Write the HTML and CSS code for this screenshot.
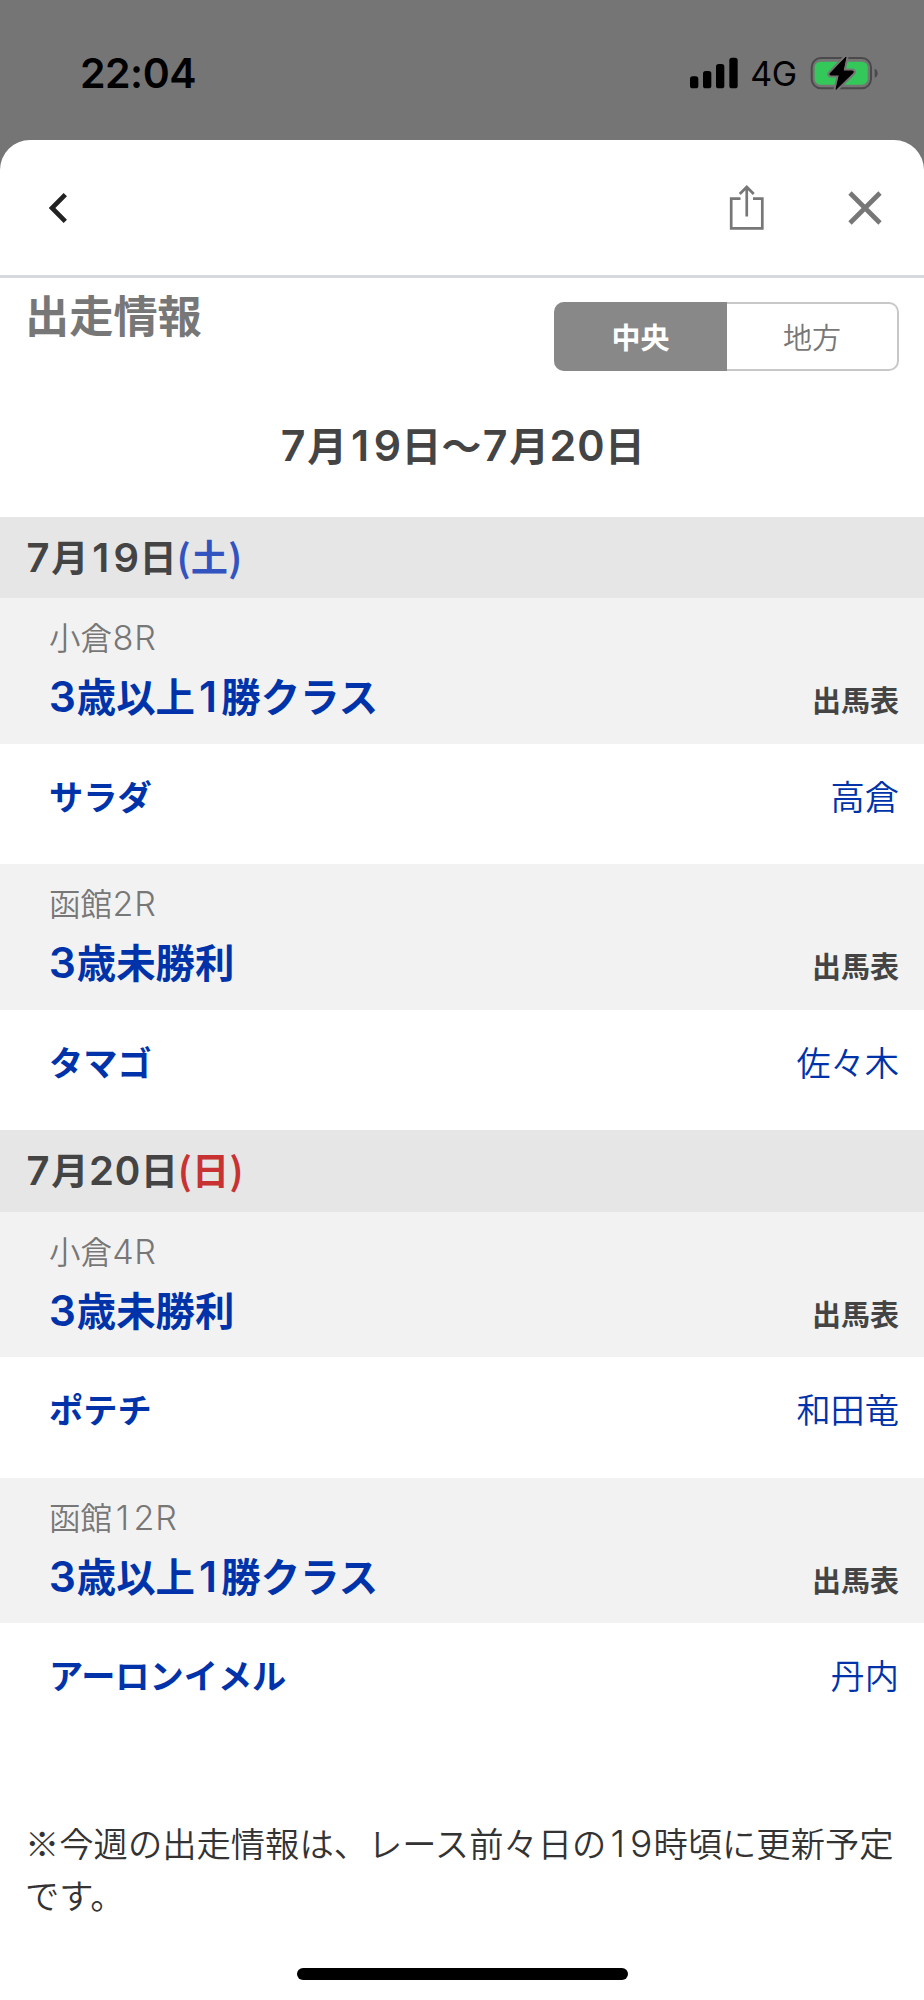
FILE: index.html
```html
<!DOCTYPE html>
<html lang="ja">
<head>
<meta charset="utf-8">
<meta name="viewport" content="width=device-width">
<title>出走情報</title>
<link rel="stylesheet" href="styles.css">
</head>
<body>
<div class="status">
  <div class="time">22:04</div>
  <div class="indicators">
    <svg class="signal" viewBox="84 80 144 96"><rect x="84" y="138" width="25" height="36" rx="8"/><rect x="123" y="122" width="25" height="52" rx="8"/><rect x="162" y="101" width="25" height="73" rx="8"/><rect x="202" y="82" width="25" height="92" rx="8"/></svg>
    <span class="network">4G</span>
    <svg class="battery" viewBox="445 74 206 108">
      <rect x="450" y="83" width="178" height="91" rx="28" fill="none" stroke="#4a4a4a" stroke-width="6"/>
      <path d="M639 115q9 3 9 13.500t-9 13.500z" fill="#4a4a4a"/>
      <rect x="459" y="94" width="159" height="69" rx="17" fill="#34c759"/>
      <path d="M553 80L505 130q-2 4 3 4H533L523 177L574 127q3-5-3-5H544z" fill="#000" stroke="#757575" stroke-width="15" stroke-linejoin="round" paint-order="stroke"/>
      <path d="M553 80L505 130q-2 4 3 4H533L523 177L574 127q3-5-3-5H544z" stroke="#000" stroke-width="3" stroke-linejoin="round"/>
    </svg>
  </div>
</div>
<main class="sheet">
  <header class="toolbar">
    <svg class="back" viewBox="0 0 20 30"><path d="M16.300 1.700L3 15L16.300 28.300" fill="none" stroke="#222" stroke-width="4.700"/></svg>
    <div class="actions">
      <svg class="share" viewBox="0 0 36 46"><path d="M11.500 13.700H2.200V43.300H33.300V13.700H24M17.750 31.500V2.500M10.750 9L17.750 2L24.750 9" fill="none" stroke="#777" stroke-width="2.700"/></svg>
      <svg class="close" viewBox="0 0 34 34"><path d="M2 2L32 32M32 2L2 32" fill="none" stroke="#777" stroke-width="4.700"/></svg>
    </div>
  </header>
  <div class="heading">
    <h1>出走情報</h1>
    <div class="toggle"><span class="tab active">中央</span><span class="tab">地方</span></div>
  </div>
  <div class="range"><b class="n">7</b>月<b class="n"><span class="one">1</span>9</b>日〜<b class="n">7</b>月<b class="n">20</b>日</div>

  <h2 class="day"><b class="n">7</b>月<b class="n"><span class="one">1</span>9</b>日<span class="sat">(土)</span></h2>
  <section>
    <div class="race"><div><div class="place">小倉<span class="n">8R</span></div><div class="name"><b class="n">3</b>歳以上<b class="n one">1</b>勝クラス</div></div><span class="card">出馬表</span></div>
    <div class="entry"><span class="horse">サラダ</span><span class="jockey">高倉</span></div>
  </section>
  <section>
    <div class="race"><div><div class="place">函館<span class="n">2R</span></div><div class="name"><b class="n">3</b>歳未勝利</div></div><span class="card">出馬表</span></div>
    <div class="entry"><span class="horse">タマゴ</span><span class="jockey">佐々木</span></div>
  </section>

  <h2 class="day"><b class="n">7</b>月<b class="n">20</b>日<span class="sun">(日)</span></h2>
  <section>
    <div class="race"><div><div class="place">小倉<span class="n">4R</span></div><div class="name"><b class="n">3</b>歳未勝利</div></div><span class="card">出馬表</span></div>
    <div class="entry"><span class="horse">ポテチ</span><span class="jockey">和田竜</span></div>
  </section>
  <section>
    <div class="race"><div><div class="place">函館<span class="n"><span class="one">1</span>2R</span></div><div class="name"><b class="n">3</b>歳以上<b class="n one">1</b>勝クラス</div></div><span class="card">出馬表</span></div>
    <div class="entry"><span class="horse">アーロンイメル</span><span class="jockey">丹内</span></div>
  </section>
  <p class="note">※今週の出走情報は、レース前々日の<span class="n"><span class="one">1</span>9</span>時頃に更新予定<br>です。</p>
  <div class="home"></div>
</main>
</body>
</html>
```
FILE: styles.css
```css
* { box-sizing: border-box; }
body {
  margin: 0;
  width: 924px;
  height: 2000px;
  overflow: hidden;
  background: #757575;
  color: #444;
  font-family: "Noto Sans CJK JP", sans-serif;
}
svg { display: block; }
h1, h2, p { margin: 0; }
.status {
  height: 140px;
  padding: 0 45px 0 80px;
  display: flex;
  justify-content: space-between;
  color: #000;
  font-family: Inter, sans-serif;
}
.time { font-size: 41px; font-weight: 600; line-height: 50px; padding-top: 48px; letter-spacing: -.5px; }
.indicators { display: flex; height: 50px; margin-top: 48px; align-items: center; }
.signal { width: 48px; height: 32px; }
.network { font-size: 34px; line-height: 52px; width: 61px; padding: 2px 0 0 12px; letter-spacing: -.5px; }
.battery { width: 68.700px; height: 36px; margin-left: 11px; }
.sheet {
  height: 1860px;
  background: #fff;
  border-radius: 30px 30px 0 0;
}
.toolbar {
  height: 138px;
  padding: 0 42px 0 49px;
  border-bottom: 3px solid #d6dade;
  display: flex;
  align-items: center;
  justify-content: space-between;
}
.back { width: 20px; height: 30px; }
.actions { display: flex; gap: 83.500px; align-items: center; }
.share { width: 36px; height: 46px; }
.close { width: 34px; height: 34px; }
.heading {
  height: 94px;
  padding: 0 25px 0 26px;
  display: flex;
  justify-content: space-between;
}
h1 { color: #777; font-size: 44.200px; font-weight: 700; line-height: 72px; margin-left: -1px; }
.toggle {
  width: 345px;
  height: 69px;
  margin-top: 24px;
  border: 2px solid #c8c8c8;
  border-left: 0;
  border-radius: 10px;
  display: flex;
  background: #fff;
}
.tab { flex: 1; font-size: 29px; line-height: 64px; text-align: center; color: #777; font-weight: 350; }
.active {
  flex: 0 0 173px;
  height: 69px;
  margin: -2px 0;
  background: #888;
  border-radius: 10px 0 0 10px;
  color: #fff;
  font-weight: 700;
  line-height: 68px;
}
.range {
  height: 144.800px;
  line-height: 143px;
  font-size: 39.800px;
  font-weight: 700;
  text-align: center;
}
.n {
  font-family: Inter, sans-serif;
  font-size: 1.080em;
  line-height: 1;
  letter-spacing: .005em;
  font-variant-numeric: tabular-nums;
}
b.n { font-weight: 600; }
/* proportional "1" in a digit-wide box */
.one {
  display: inline-block;
  width: .62em;
  text-align: center;
  font-variant-numeric: normal;
}
.day {
  height: 81.400px;
  padding-left: 25px;
  background: #e6e6e6;
  font-size: 37.200px;
  font-weight: 700;
  line-height: 79px;
}
.sat { color: #3353c0; }
.sun { color: #c83232; }
.race {
  height: 145.500px;
  padding: 13px 25px 0 49px;
  display: flex;
  justify-content: space-between;
  background: #f2f2f2;
}
.place { height: 50px; line-height: 50px; font-size: 31.500px; font-weight: 350; color: #777; }
.place .n { font-weight: 300; }
.name { height: 68px; line-height: 68px; font-size: 39.400px; font-weight: 700; color: #03a; }
.card { padding-top: 60px; line-height: 56px; font-size: 29px; font-weight: 700; }
.entry {
  height: 120.600px;
  padding: 0 25px 0 49px;
  display: flex;
  justify-content: space-between;
  line-height: 103px;
  font-size: 34.200px;
  color: #03a;
}
.horse { font-weight: 700; }
.jockey { font-weight: 350; }
.note { padding: 72px 0 0 25px; line-height: 52px; font-size: 34.300px; font-weight: 350; color: #333; white-space: nowrap; }
.note .n { font-weight: 300; }
.home { width: 331px; height: 12px; margin: 48px auto 0; border-radius: 6px; background: #000; }
```
